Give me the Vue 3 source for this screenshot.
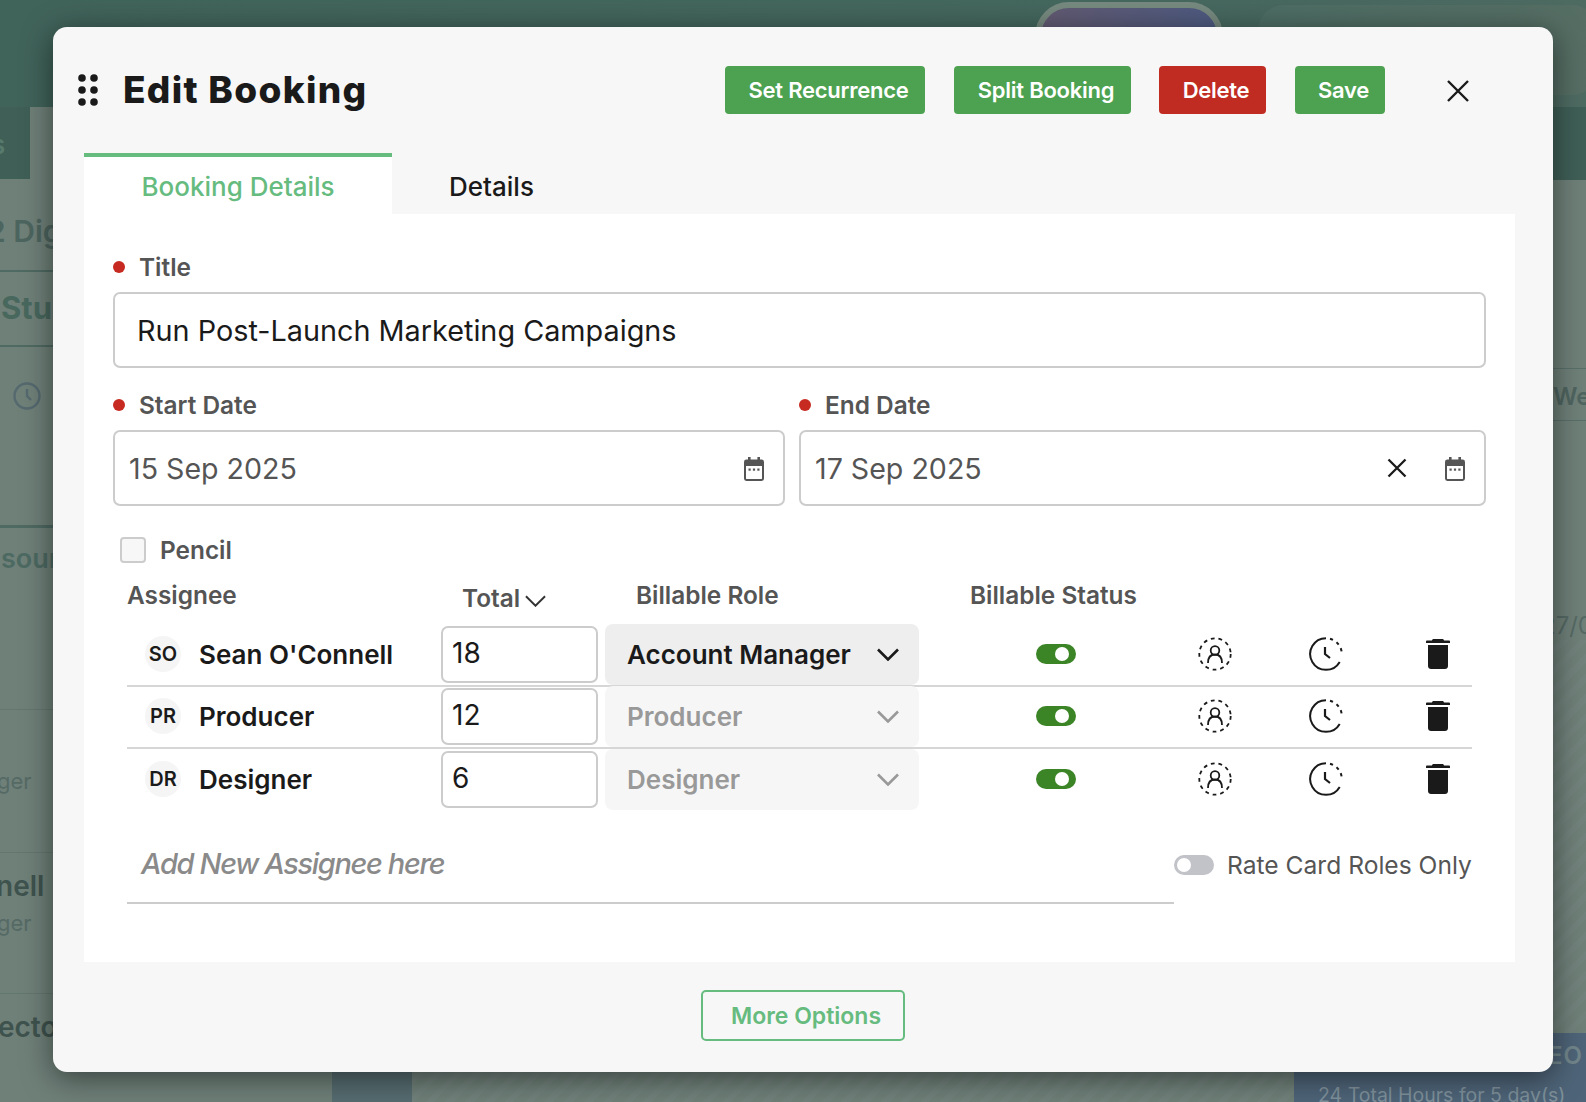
<script setup>
const rows = [
  { initials: 'SO', name: "Sean O'Connell", total: '18', role: 'Account Manager', active: true },
  { initials: 'PR', name: 'Producer', total: '12', role: 'Producer', active: false },
  { initials: 'DR', name: 'Designer', total: '6', role: 'Designer', active: false },
]
</script>

<template>
  <div class="page">
    <div class="backdrop">
      <div class="bg-head"></div>
      <div class="bg-tabdark"></div>
      <div class="bg-band"></div>
      <div class="bg-avatar"></div>
      <div class="bg-card"></div>
      <div class="bg-hatch"></div>
      <div class="bg-strip"></div>
      <div class="bg-navy">
        <span class="bg-eo">EO</span>
        <span class="bg-hours">24 Total Hours for 5 day(s)</span>
      </div>
      <i class="bg-line l1"></i>
      <i class="bg-line l2"></i>
      <i class="bg-line l3"></i>
      <i class="bg-line f1"></i>
      <i class="bg-line f2"></i>
      <i class="bg-line f3"></i>
      <i class="bg-line r1"></i>
      <i class="bg-line r2"></i>
      <span class="bg-t t-s">s</span>
      <span class="bg-t t-dig">2 Dig</span>
      <span class="bg-t t-stu">Stu</span>
      <span class="bg-t t-sour">sour</span>
      <span class="bg-t t-ger1">ger</span>
      <span class="bg-t t-nell">nell</span>
      <span class="bg-t t-ger2">ger</span>
      <span class="bg-t t-ecto">ecto</span>
      <span class="bg-t t-we">We</span>
      <span class="bg-t t-date">27/0</span>
      <svg class="bg-clock" viewBox="0 0 28 28" fill="none" stroke="#55696f" stroke-width="2.4">
        <circle cx="14" cy="14" r="12.5" />
        <path d="M14 7v7l4 4" />
      </svg>
    </div>

    <section class="modal">
      <header class="head">
        <svg class="grip" viewBox="0 0 20 32" fill="#1a1a1a">
          <circle cx="4" cy="4" r="3.8" /><circle cx="16" cy="4" r="3.8" />
          <circle cx="4" cy="16" r="3.8" /><circle cx="16" cy="16" r="3.8" />
          <circle cx="4" cy="28" r="3.8" /><circle cx="16" cy="28" r="3.8" />
        </svg>
        <h1 class="title">Edit Booking</h1>
        <div class="actions">
          <button class="btn green b1">Set Recurrence</button>
          <button class="btn green b2">Split Booking</button>
          <button class="btn red b3">Delete</button>
          <button class="btn green b4">Save</button>
        </div>
        <svg class="close" viewBox="0 0 24 24" fill="none" stroke="#1a1a1a" stroke-width="2.4">
          <path d="M2 2l20 20M22 2L2 22" />
        </svg>
      </header>

      <nav class="tabs">
        <div class="tab active">Booking Details</div>
        <div class="tab">Details</div>
      </nav>

      <div class="panel">
        <label class="lbl"><i class="dot"></i>Title</label>
        <div class="field title-field">Run Post-Launch Marketing Campaigns</div>

        <div class="dates">
          <div class="date-col">
            <label class="lbl"><i class="dot"></i>Start Date</label>
            <div class="field date-field">
              <span class="date-text">15 Sep 2025</span>
              <svg class="cal" viewBox="0 0 20 24" fill="#555">
                <path fill-rule="evenodd" d="M4 0h2.6v2.5h6.8V0H16v2.5h1.6A2.4 2.4 0 0 1 20 4.900V21.600A2.400 2.400 0 0 1 17.600 24H2.400A2.400 2.400 0 0 1 0 21.600V4.900A2.400 2.400 0 0 1 2.400 2.500H4zM2 9v12.600c0 .2.200.4.400.4h15.200c.2 0 .4-.2.400-.4V9z" />
                <rect x="4.500" y="11.500" width="2.200" height="2.200" /><rect x="8.900" y="11.500" width="2.200" height="2.200" /><rect x="13.300" y="11.500" width="2.200" height="2.200" />
              </svg>
            </div>
          </div>
          <div class="date-col">
            <label class="lbl"><i class="dot"></i>End Date</label>
            <div class="field date-field">
              <span class="date-text">17 Sep 2025</span>
              <svg class="clear" viewBox="0 0 20 20" fill="none" stroke="#1a1a1a" stroke-width="2.300">
                <path d="M1.500 1.500l17 17M18.500 1.500l-17 17" />
              </svg>
              <svg class="cal" viewBox="0 0 20 24" fill="#555">
                <path fill-rule="evenodd" d="M4 0h2.6v2.5h6.8V0H16v2.5h1.6A2.4 2.4 0 0 1 20 4.900V21.600A2.400 2.400 0 0 1 17.600 24H2.400A2.400 2.400 0 0 1 0 21.600V4.900A2.400 2.400 0 0 1 2.400 2.500H4zM2 9v12.600c0 .2.200.4.400.4h15.200c.2 0 .4-.2.400-.4V9z" />
                <rect x="4.500" y="11.500" width="2.200" height="2.200" /><rect x="8.900" y="11.500" width="2.200" height="2.200" /><rect x="13.300" y="11.500" width="2.200" height="2.200" />
              </svg>
            </div>
          </div>
        </div>

        <div class="pencil"><i class="check"></i><span>Pencil</span></div>

        <div class="table">
          <div class="grid thead">
            <span class="th-a">Assignee</span>
            <span class="th-t">Total
              <svg class="th-chev" viewBox="0 0 22 12" fill="none" stroke="#333" stroke-width="2"><path d="M1 1l10 10L21 1" /></svg>
            </span>
            <span class="th-r">Billable Role</span>
            <span class="th-s">Billable Status</span>
          </div>

          <div v-for="(r, i) in rows" :key="r.initials" class="grid row" :class="{ last: i === 2 }">
            <div class="who">
              <span class="avatar">{{ r.initials }}</span>
              <span class="name">{{ r.name }}</span>
            </div>
            <div class="total">{{ r.total }}</div>
            <div class="role" :class="{ on: r.active }">
              <span>{{ r.role }}</span>
              <svg class="role-chev" viewBox="0 0 24 13" fill="none" stroke-width="2.600"><path d="M2 1.500l10 10 10-10" /></svg>
            </div>
            <div class="status"><span class="toggle"><i></i></span></div>
            <div class="ic person">
              <svg viewBox="0 0 34 34" fill="none" stroke="#1a1a1a" stroke-width="1.800">
                <circle cx="17" cy="17" r="15.700" stroke-dasharray="3.800 3.900" />
                <circle cx="17" cy="13.500" r="4.300" />
                <path d="M10 26c0-6 3-8.500 7-8.500s7 2.500 7 8.500" />
              </svg>
            </div>
            <div class="ic clock">
              <svg viewBox="0 0 34 34" fill="none" stroke="#1a1a1a" stroke-width="2">
                <path d="M17 1.200A15.800 15.800 0 1 0 30.700 24.900" />
                <path d="M21 1.700A15.800 15.800 0 0 1 32.800 17" stroke-dasharray="3.200 4.200" />
                <path d="M16 10v7l5 4" stroke-width="2.200" />
              </svg>
            </div>
            <div class="ic trash">
              <svg viewBox="0 0 24 30" fill="#1a1a1a">
                <path d="M6 1.500C6 .6 6.800 0 7.600 0h8.800c.8 0 1.600.6 1.600 1.500h5c.5 0 1 .5 1 1v1.500H0V2.500c0-.5.500-1 1-1z" />
                <path d="M2 6h20v21c0 1.700-1.300 3-3 3H5c-1.700 0-3-1.300-3-3z" />
              </svg>
            </div>
          </div>

          <div class="add">
            <div class="add-field">Add New Assignee here</div>
            <div class="rate">
              <span class="toggle off"><i></i></span>
              <span class="rate-text">Rate Card Roles Only</span>
            </div>
          </div>
        </div>
      </div>

      <footer class="foot">
        <button class="more">More Options</button>
      </footer>
    </section>
  </div>
</template>

<style>
html, body { margin: 0; padding: 0; }
</style>

<style scoped>
.page {
  position: relative;
  width: 1586px;
  height: 1102px;
  overflow: hidden;
  background: #6f8079;
  font-family: Inter, "Liberation Sans", sans-serif;
}
.backdrop { position: absolute; inset: 0; overflow: hidden; }
.backdrop > * { position: absolute; }
.bg-head { left: 0; top: 0; width: 100%; height: 107px; background: linear-gradient(90deg, #40635a, #44675e 70%, #4e6b62); }
.bg-tabdark { left: 0; top: 107px; width: 30px; height: 72px; background: #3f5f57; }
.bg-band { left: 1553px; top: 107px; width: 33px; height: 73px; background: #3f5f57; }
.bg-avatar { left: 1035px; top: 2px; width: 176px; height: 60px; border: 6px solid #76897f; border-radius: 34px; background: linear-gradient(90deg, #625a72, #4d5a80); }
.bg-card { left: 1258px; top: 5px; width: 340px; height: 90px; border-radius: 26px; background: linear-gradient(90deg, #4d6d64, #566e64); }
.bg-hatch { left: 412px; top: 640px; width: 1174px; height: 462px; background: repeating-linear-gradient(135deg, rgba(255,255,255,.018) 0 6px, transparent 6px 14px); }
.bg-strip { left: 332px; top: 1060px; width: 80px; height: 42px; background: #566c70; }
.bg-navy { left: 1294px; top: 1033px; width: 292px; height: 69px; background: #4e6478; }
.bg-eo { position: absolute; left: 254px; top: 8px; font-size: 24px; font-weight: 600; color: #71858a; letter-spacing: 1px; white-space: nowrap; }
.bg-hours { position: absolute; left: 24px; top: 50px; font-size: 19.5px; color: #7f919b; white-space: nowrap; }
.bg-line { display: block; background: #4f6a62; height: 2px; }
.l1 { left: 0; top: 270px; width: 60px; }
.l2 { left: 0; top: 345px; width: 60px; }
.l3 { left: 0; top: 525px; width: 60px; height: 3px; }
.f1 { left: 0; top: 709px; width: 60px; height: 1px; background: #647670; }
.f2 { left: 0; top: 852px; width: 60px; height: 1px; background: #647670; }
.f3 { left: 0; top: 993px; width: 60px; height: 1px; background: #647670; }
.r1 { left: 1553px; top: 368px; width: 33px; height: 1px; background: #59706a; }
.r2 { left: 1553px; top: 420px; width: 33px; height: 1px; background: #59706a; }
.bg-t { white-space: nowrap; line-height: 1; font-weight: 600; color: #4d655f; }
.t-s { left: -9px; top: 132px; font-size: 26px; color: #587a6c; }
.t-dig { left: -13px; top: 216px; font-size: 30px; }
.t-stu { left: 1px; top: 292px; font-size: 31px; font-weight: 700; color: #48685e; }
.t-sour { left: 1px; top: 545px; font-size: 27px; color: #4d6a62; }
.t-ger1 { left: -3px; top: 770px; font-size: 22px; font-weight: 400; color: #566a65; }
.t-nell { left: -4px; top: 872px; font-size: 28px; color: #3f534e; }
.t-ger2 { left: -3px; top: 912px; font-size: 22px; font-weight: 400; color: #566a65; }
.t-ecto { left: -2px; top: 1013px; font-size: 28px; color: #3f534e; }
.t-we { left: 1553px; top: 385px; font-size: 24px; color: #4f6560; }
.t-date { left: 1541px; top: 614px; font-size: 24px; font-weight: 400; color: #566a65; }
.bg-clock { left: 13px; top: 382px; width: 28px; height: 28px; }

.modal {
  position: absolute;
  left: 53px;
  top: 27px;
  width: 1500px;
  height: 1045px;
  box-sizing: border-box;
  padding-top: 39px;
  background: #f7f7f7;
  border-radius: 14px;
  box-shadow: 0 6px 30px rgba(0, 0, 0, .5);
}
.head { display: flex; align-items: center; height: 48px; padding-left: 25px; }
.grip { width: 20px; height: 32px; flex: none; }
.title { margin: -2px 0 0 25px; font-size: 37px; font-weight: 800; color: #1a1a1a; letter-spacing: 1.3px; white-space: nowrap; }
.actions { display: flex; position: absolute; left: 672px; top: 39px; }
.btn { height: 48px; border: 0; padding: 0 0 0 7px; border-radius: 4px; color: #fff; font: 600 22px Inter, sans-serif; letter-spacing: -.25px; }
.green { background: #4ca250; }
.red { background: #c02b22; }
.b1 { width: 200px; }
.b2 { width: 177px; margin-left: 29px; }
.b3 { width: 107px; margin-left: 28px; }
.b4 { width: 90px; margin-left: 29px; }
.close { position: absolute; left: 1393px; top: 52px; width: 24px; height: 24px; }

.tabs { display: flex; margin: 39px 0 0 31px; height: 61px; }
.tab { padding: 2px 58px 0 57px; height: 61px; box-sizing: border-box; border-top: 4px solid transparent; display: flex; align-items: center; font-size: 26px; font-weight: 500; color: #1a1a1a; }
.tab.active { width: 308px; padding: 2px 0 0; justify-content: center; background: #fff; border-top-color: #66bb7f; color: #66bb7f; }

.panel { margin: 0 38px 0 31px; height: 748px; box-sizing: border-box; padding: 39px 29px 0; background: #fff; }
.lbl { display: flex; align-items: center; height: 28px; font-size: 24.400px; font-weight: 600; color: #555; }
.dot { width: 12px; height: 12px; border-radius: 50%; background: #c62a20; margin-right: 14px; flex: none; }
.field { box-sizing: border-box; border: 2px solid #ccc; border-radius: 7px; height: 76px; margin-top: 11px; background: #fff; display: flex; align-items: center; }
.title-field { padding: 0 0 0 22px; font-size: 28.800px; color: #1a1a1a; }
.dates { display: flex; gap: 14px; margin-top: 23px; }
.date-col { flex: 1 1 0; min-width: 0; }
.date-col:first-child { flex: 0 0 672px; }
.date-field { padding: 0 0 0 14px; position: relative; }
.date-text { flex: 1; font-size: 28.600px; color: #555; }
.cal { width: 20px; height: 24px; margin: 2px 19px 0 0; flex: none; }
.clear { width: 20px; height: 20px; margin-right: 38px; flex: none; }
.pencil { display: flex; align-items: center; margin: 31px 0 0 7px; height: 26px; font-size: 24.400px; font-weight: 600; color: #555; }
.check { box-sizing: border-box; width: 26px; height: 26px; border: 2px solid #ccc; border-radius: 4px; background: #f7f7f7; margin-right: 14px; }

.table { margin: 0 14px; }
.grid { display: grid; grid-template-columns: 314px 164px 314px 240px 111px 112px 90px; align-items: center; }
.thead { height: 28px; margin: 17px 0 17px; font-size: 24.400px; font-weight: 600; color: #555; white-space: nowrap; }
.th-t { padding-left: 21px; position: relative; top: 3px; display: flex; align-items: center; }
.th-chev { width: 21px; height: 12px; margin: 6px 0 0 5px; }
.th-r { padding-left: 31px; }
.th-s { padding-left: 51px; }
.row { height: 62px; box-sizing: border-box; border-bottom: 2px solid #d6d6d6; }
.row.last { border-bottom: 0; }
.who { display: flex; align-items: center; padding: 0 0 2px 18px; }
.avatar { width: 36px; height: 36px; border-radius: 50%; background: #f5f5f5; display: flex; align-items: center; justify-content: center; font-size: 20px; font-weight: 600; color: #1a1a1a; flex: none; }
.name { margin-left: 18px; font-size: 26px; font-weight: 600; color: #1a1a1a; white-space: nowrap; }
.total { box-sizing: border-box; width: 157px; height: 57px; margin-top: -1px; border: 2px solid #ccc; border-radius: 7px; display: flex; align-items: center; padding: 0 0 3px 9px; font-size: 28px; color: #1a1a1a; }
.role { height: 61px; margin-top: -2px; display: flex; align-items: center; justify-content: space-between; padding: 0 19px 0 22px; border-radius: 8px; background: #f6f6f6; font-size: 26px; font-weight: 600; color: #999; }
.role-chev { width: 24px; height: 13px; stroke: #999; }
.role.on { background: #eee; color: #1a1a1a; }
.role.on .role-chev { stroke: #1a1a1a; }
.status { padding: 0 0 2px 117px; display: flex; }
.toggle { display: block; position: relative; width: 40px; height: 20px; border-radius: 10px; background: #3c8527; flex: none; }
.toggle i { position: absolute; right: 7px; top: 3px; width: 14px; height: 14px; border-radius: 50%; background: #fff; }
.toggle.off { background: #c2c3c8; }
.toggle.off i { right: auto; left: 3px; }
.ic { display: flex; justify-content: center; padding-bottom: 2px; }
.ic svg { width: 34px; height: 34px; }
.trash { justify-content: flex-start; padding-left: 44px; }
.trash svg { width: 24px; height: 30px; }

.add { display: flex; margin-top: 23px; align-items: flex-start; }
.add-field { box-sizing: border-box; flex: none; width: 1047px; height: 70px; border-bottom: 2px solid #ccc; display: flex; align-items: flex-start; padding: 12px 0 0 14px; font-size: 29px; font-weight: 500; font-style: italic; letter-spacing: -1.35px; color: #8a8a8a; white-space: nowrap; }
.rate { display: flex; flex: none; align-items: center; height: 62px; }
.rate-text { margin-left: 13px; font-size: 24.600px; color: #555; white-space: nowrap; }

.foot { display: flex; justify-content: center; padding-top: 28px; }
.more { box-sizing: border-box; width: 204px; height: 51px; background: transparent; border: 2px solid #66bb7f; border-radius: 5px; color: #66bb7f; font: 600 23px Inter, sans-serif; padding: 0 0 0 6px; }
</style>
